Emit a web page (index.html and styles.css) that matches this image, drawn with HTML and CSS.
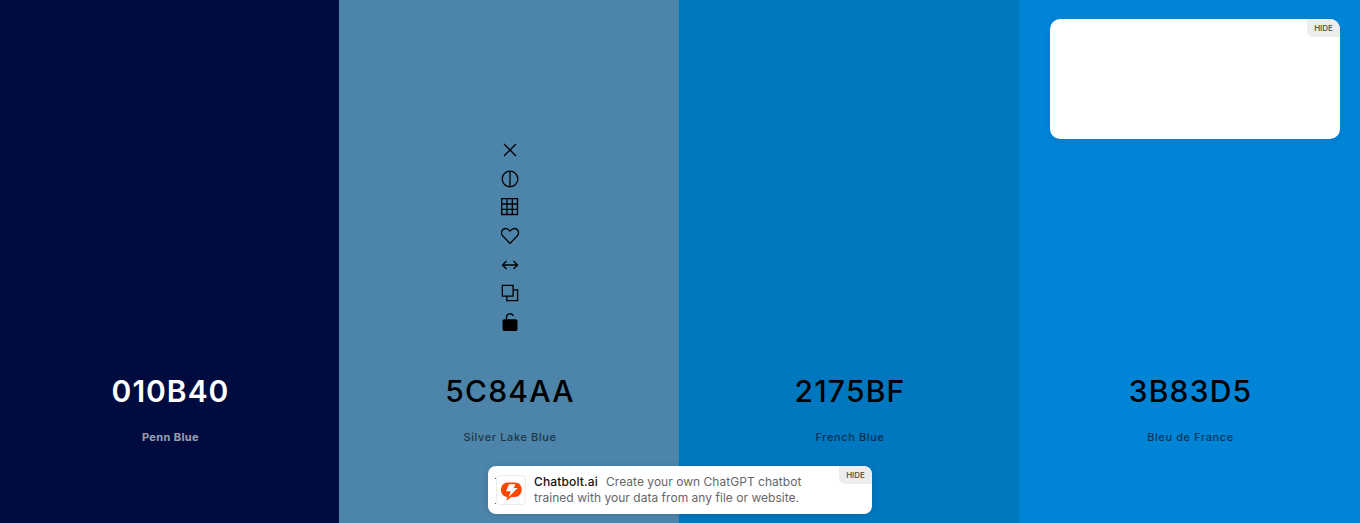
FILE: index.html
```html
<!DOCTYPE html>
<html lang="en">
<head>
<meta charset="utf-8">
<title>Color palette</title>
<link rel="stylesheet" href="styles.css">
</head>
<body>
<main class="palette">
  <section class="color penn">
    <h2 class="hex">010B40</h2>
    <p class="name">Penn Blue</p>
  </section>
  <section class="color silver">
    <div class="tools">
      <svg viewBox="0 0 20 20"><path d="M4 4l12 12M16 4l-12 12"/></svg>
      <svg viewBox="0 0 20 20"><circle cx="10" cy="10" r="7.8"/><path d="M10 2.2v15.6"/></svg>
      <svg viewBox="0 0 20 20"><path d="M1.7 1.7h15.8v15.8H1.7zM7 1.7v15.8M12.3 1.7v15.8M1.7 7h15.8M1.7 12.3h15.8"/></svg>
      <svg viewBox="0 0 20 20"><path d="M10 17.4L2.8 10C1 8.100 1.100 5.200 2.900 3.600C4.700 2 7.500 2.200 9.100 4.100L10 5.100L10.900 4.100C12.500 2.200 15.300 2 17.100 3.600C18.900 5.200 19 8.100 17.200 10Z"/></svg>
      <svg viewBox="0 0 20 20"><path d="M2.500 10h15M6.500 6l-4 4 4 4M13.500 6l4 4-4 4"/></svg>
      <svg viewBox="0 0 20 20"><path d="M2.300 2.300h10.800v10.800H2.300zM13.100 6.800h4.500v10.800H6.800v-4.500"/></svg>
      <svg viewBox="0 0 20 20"><rect class="solid" x="2.500" y="7.200" width="15" height="11.800" rx="2"/><path d="M6.500 8V5.200c0-4.200 5.600-4.500 7-1.300"/></svg>
    </div>
    <h2 class="hex">5C84AA</h2>
    <p class="name">Silver Lake Blue</p>
  </section>
  <section class="color french">
    <h2 class="hex">2175BF</h2>
    <p class="name">French Blue</p>
  </section>
  <section class="color france">
    <h2 class="hex">3B83D5</h2>
    <p class="name">Bleu de France</p>
  </section>
</main>
<aside class="panel"><button class="hide">HIDE</button></aside>
<aside class="promo">
  <div class="logo">
    <svg viewBox="0 0 28 28"><path class="bubble" d="M11 6.500h7c4.300 0 6.700 3 6.700 7s-2.700 7.500-7.200 7.500h-3.300L9.300 24.800l1-3.800C6.300 20.500 4 17.600 4 13.700c0-4.200 2.800-7.200 7-7.200z"/><path class="bolt" d="M12 8.300h6.500l-1.900 3.600h4.100l-9 9.200 2-5.800H9z"/></svg>
  </div>
  <p class="copy"><strong>Chatbolt.ai</strong>Create your own ChatGPT chatbot<br>trained with your data from any file or website.</p>
  <button class="hide">HIDE</button>
</aside>
</body>
</html>
```
FILE: styles.css
```css
* { box-sizing: border-box; }
body { margin: 0; height: 523px; overflow: hidden; font-family: Inter, sans-serif; }
.palette { display: grid; grid-template-columns: 339px 340px 340px 341px; height: 523px; }
.color { display: flex; flex-direction: column; align-items: center; justify-content: flex-end; padding: 0 0 78px 2px; color: #000; }
.penn { background: #000b3f; color: #fff; }
.silver { background: #4c84aa; }
.french { background: #0077bf; }
.france { background: #0084d6; }
.hex { margin: 0; font-size: 30px; line-height: 40px; font-weight: 500; letter-spacing: 1.200px; }
.name { margin: 18px 0 0; font-size: 11px; line-height: 16px; font-weight: 500; letter-spacing: .6px; opacity: .6; }
.penn .hex { font-weight: 600; letter-spacing: 1px; }
.penn .name { font-weight: 700; letter-spacing: .4px; }
.tools { display: flex; flex-direction: column; gap: 8.700px; margin-bottom: 39px; }
.tools svg { display: block; width: 20px; height: 20px; fill: none; stroke: #000; stroke-width: 1.300; }
.tools .solid { fill: #000; stroke: none; }
.panel { position: absolute; top: 19px; left: 1050px; width: 290px; height: 120px; border-radius: 10px; background: #fff; box-shadow: 0 2px 6px #00000012; }
.hide { position: absolute; top: 0; right: 0; width: 33px; height: 18px; padding: 0; border: 0; border-radius: 0 10px 0 6px; background: #ededed; color: #3c4a3c; font: 500 8px/18px Inter, sans-serif; }
.promo { position: absolute; top: 466px; left: 488px; width: 384px; height: 48px; display: flex; gap: 8px; padding: 8px; border-radius: 8px; background: #fff; box-shadow: 0 1px 6px #0002; }
.logo { position: relative; width: 30px; height: 30px; margin-top: 1px; border: 1px solid #ececec; border-radius: 4px; }
.logo::before { content: ""; position: absolute; left: -2px; top: 2px; width: 1px; height: 24px; border-top: 1px solid #555; border-bottom: 1px solid #555; }
.logo svg { display: block; width: 28px; height: 28px; }
.bubble { fill: #ff4500; }
.bolt { fill: #fff; }
.copy { margin: 0; font-size: 12px; line-height: 16px; color: #66666a; letter-spacing: .03px; white-space: nowrap; }
.copy strong { margin-right: 8px; font-weight: 500; color: #111; letter-spacing: .150px; }
```
